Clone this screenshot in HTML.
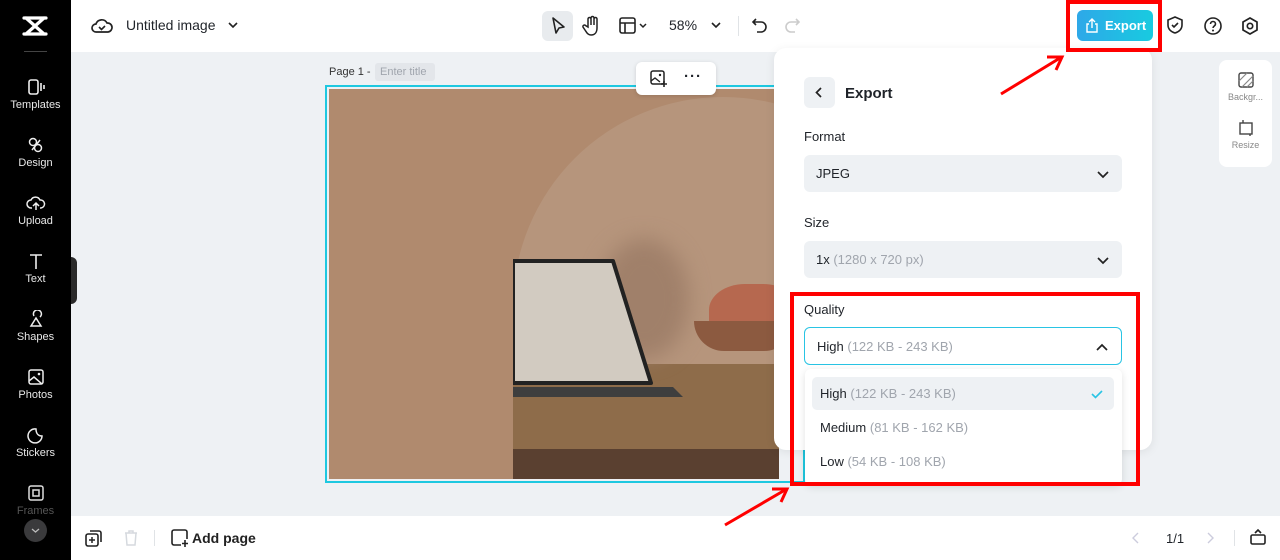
<!DOCTYPE html>
<html><head><meta charset="utf-8">
<style>
*{box-sizing:border-box;margin:0;padding:0}
html,body{width:1280px;height:560px;overflow:hidden}
body{font-family:"Liberation Sans",sans-serif;background:#eef1f4;position:relative;color:#1f2329}
.abs{position:absolute}
.side{left:0;top:0;width:71px;height:560px;background:#000;overflow:hidden}
.si{position:absolute;left:0;width:71px;text-align:center;color:#e8e8e8;font-size:11px}
.si svg{display:block;margin:0 auto 3px}
.top{left:71px;top:0;width:1209px;height:52px;background:#fff}
.bot{left:71px;top:516px;width:1209px;height:44px;background:#fff}
.panel{left:774px;top:48px;width:378px;height:402px;background:#fff;border-radius:12px;box-shadow:0 2px 10px rgba(0,0,0,.08)}
.lbl{font-size:13px;color:#1f2329}
.sel{position:absolute;left:30px;width:318px;height:37px;background:#eef1f4;border-radius:6px;font-size:13px;padding:11px 12px}
.g{color:#a0a5ad}
.chev{position:absolute;right:12px;top:12px}
</style></head><body>
<div class="abs side">
 <svg class="abs" style="left:22px;top:15px" width="26" height="22" viewBox="0 0 26 22"><path d="M2 3h22M2 19h22M4 3L22 19M22 3L4 19" stroke="#fff" stroke-width="3.2" fill="none" stroke-linecap="round"/></svg>
 <div class="abs" style="left:24px;top:51px;width:23px;height:1px;background:#444"></div>
 <div class="si" style="top:78px"><svg width="20" height="18" viewBox="0 0 20 18"><rect x="3" y="2" width="9" height="14" rx="2" stroke="#eee" stroke-width="1.6" fill="none"/><path d="M15 5v8M18 7v4" stroke="#eee" stroke-width="1.6"/></svg>Templates</div>
 <div class="si" style="top:136px"><svg width="20" height="18" viewBox="0 0 20 18"><circle cx="7" cy="6" r="3.5" stroke="#eee" stroke-width="1.5" fill="none"/><circle cx="12" cy="12" r="3.5" stroke="#eee" stroke-width="1.5" fill="none"/><path d="M6 14L14 4" stroke="#eee" stroke-width="1.5"/></svg>Design</div>
 <div class="si" style="top:194px"><svg width="20" height="18" viewBox="0 0 20 18"><path d="M6 14H5a4 4 0 010-8 5 5 0 019 0 4 4 0 011 8h-1M10 16V9m-3 3l3-3 3 3" stroke="#eee" stroke-width="1.5" fill="none"/></svg>Upload</div>
 <div class="si" style="top:252px"><svg width="20" height="18" viewBox="0 0 20 18"><path d="M4 3h12M10 3v14" stroke="#eee" stroke-width="1.6"/></svg>Text</div>
 <div class="si" style="top:310px"><svg width="20" height="18" viewBox="0 0 20 18"><path d="M10 8l5 8H5z M8 6a4 4 0 116 1" stroke="#eee" stroke-width="1.5" fill="none"/></svg>Shapes</div>
 <div class="si" style="top:368px"><svg width="20" height="18" viewBox="0 0 20 18"><rect x="3" y="2" width="14" height="14" rx="2" stroke="#eee" stroke-width="1.5" fill="none"/><path d="M3 13l5-4 8 7" stroke="#eee" stroke-width="1.5" fill="none"/><circle cx="13" cy="6" r="1.3" fill="#eee"/></svg>Photos</div>
 <div class="si" style="top:426px"><svg width="20" height="18" viewBox="0 0 20 18"><path d="M16 10a7 7 0 11-6-7c0 4 2 7 6 7z" stroke="#eee" stroke-width="1.5" fill="none"/></svg>Stickers</div>
 <div class="si" style="top:484px;color:#555"><svg width="20" height="18" viewBox="0 0 20 18"><rect x="3" y="2" width="14" height="14" rx="2" stroke="#ddd" stroke-width="1.5" fill="none"/><rect x="7" y="6" width="6" height="6" stroke="#ddd" stroke-width="1.5" fill="none"/></svg>Frames</div>
 <div class="abs" style="left:24px;top:519px;width:23px;height:23px;border-radius:50%;background:#3a3a3c"><svg width="23" height="23"><path d="M8 10l3.5 3 3.5-3" stroke="#bbb" stroke-width="1.3" fill="none"/></svg></div>
</div>
<div class="abs" style="left:71px;top:257px;width:6px;height:47px;background:#2a2a2a;border-radius:0 6px 6px 0"></div>
<div class="abs top">
 <svg class="abs" style="left:20px;top:16px" width="22" height="20" viewBox="0 0 22 20"><path d="M6 16H5a4 4 0 010-8 6 6 0 0111-1 4.5 4.5 0 011 9z" stroke="#222" stroke-width="1.7" fill="none"/><path d="M8 11l2.5 2.5L14 10" stroke="#222" stroke-width="1.6" fill="none"/></svg>
 <div class="abs" style="left:55px;top:17px;font-size:14px;color:#1f2329">Untitled image</div>
 <svg class="abs" style="left:156px;top:20px" width="12" height="10"><path d="M2 3l4 4 4-4" stroke="#222" stroke-width="1.6" fill="none"/></svg>
 <div class="abs" style="left:471px;top:11px;width:31px;height:30px;background:#e8ebee;border-radius:6px"></div>
 <svg class="abs" style="left:478px;top:16px" width="18" height="20" viewBox="0 0 18 20"><path d="M4 2l11 9-5 1-3 5z" stroke="#222" stroke-width="1.6" fill="none" stroke-linejoin="round"/></svg>
 <svg class="abs" style="left:511px;top:15px" width="20" height="22" viewBox="0 0 20 22"><path d="M6 12V4a1.5 1.5 0 013 0v6V3a1.5 1.5 0 013 0v7V4a1.5 1.5 0 013 0v9c0 4-2 7-6 7-3 0-4-2-6-5l-2-3a1.5 1.5 0 012.5-1.5z" stroke="#222" stroke-width="1.5" fill="none"/></svg>
 <svg class="abs" style="left:548px;top:17px" width="30" height="18" viewBox="0 0 30 18"><rect x="1" y="1" width="15" height="15" rx="2" stroke="#222" stroke-width="1.6" fill="none"/><path d="M1 6h15M6 6v10" stroke="#222" stroke-width="1.6"/><path d="M21 7l3 3 3-3" stroke="#222" stroke-width="1.5" fill="none"/></svg>
 <div class="abs" style="left:598px;top:17px;font-size:14px">58%</div>
 <svg class="abs" style="left:639px;top:20px" width="12" height="10"><path d="M2 3l4 4 4-4" stroke="#222" stroke-width="1.6" fill="none"/></svg>
 <div class="abs" style="left:667px;top:16px;width:1px;height:20px;background:#e0e3e6"></div>
 <svg class="abs" style="left:680px;top:16px" width="18" height="20" viewBox="0 0 18 20"><path d="M5 3L2 6l3 3M2 6h8a5 5 0 010 10H6" stroke="#222" stroke-width="1.6" fill="none"/></svg>
 <svg class="abs" style="left:712px;top:16px" width="18" height="20" viewBox="0 0 18 20"><path d="M13 3l3 3-3 3M16 6H8a5 5 0 000 10h4" stroke="#ccc" stroke-width="1.6" fill="none"/></svg>
 <div class="abs" style="left:1006px;top:10px;width:76px;height:31px;border-radius:6px;background:linear-gradient(90deg,#2ea8e8,#18cbe0);color:#fff;font-size:13px;font-weight:bold;padding:8px 0 0 28px">Export</div>
 <svg class="abs" style="left:1014px;top:18px" width="14" height="15" viewBox="0 0 14 15"><path d="M4 6H2v8h10V6h-2M7 10V1M4 4l3-3 3 3" stroke="#fff" stroke-width="1.4" fill="none"/></svg>
 <svg class="abs" style="left:1095px;top:15px" width="18" height="20" viewBox="0 0 18 20"><path d="M9 2l7 3v5c0 4-3 7-7 8-4-1-7-4-7-8V5z" stroke="#222" stroke-width="1.6" fill="none"/><path d="M6 10l2 2 4-4" stroke="#222" stroke-width="1.6" fill="none"/></svg>
 <svg class="abs" style="left:1132px;top:16px" width="20" height="20" viewBox="0 0 20 20"><circle cx="10" cy="10" r="8" stroke="#222" stroke-width="1.6" fill="none"/><path d="M7.5 8a2.5 2.5 0 115 0c0 2-2.5 2-2.5 4" stroke="#222" stroke-width="1.6" fill="none"/><circle cx="10" cy="14.5" r="1" fill="#222"/></svg>
 <svg class="abs" style="left:1169px;top:16px" width="20" height="20" viewBox="0 0 20 20"><path d="M10 2l7 4v8l-7 4-7-4V6z" stroke="#222" stroke-width="1.7" fill="none"/><circle cx="10" cy="10" r="2.7" stroke="#222" stroke-width="1.7" fill="none"/></svg>
</div>
<div class="abs" style="left:329px;top:66px;font-size:11px;color:#333">Page 1 -</div>
<div class="abs" style="left:375px;top:63px;width:60px;height:18px;background:#e3e6ea;border-radius:3px;font-size:11px;color:#a0a5ad;padding:3px 5px">Enter title</div>
<div class="abs" style="left:325px;top:85px;width:480px;height:398px;border:2px solid #1ec8e0"></div>
<div class="abs" style="left:329px;top:89px;width:450px;height:390px;background:#b08a6e;overflow:hidden">
 <div class="abs" style="left:184px;top:8px;width:420px;height:500px;border-radius:210px 210px 0 0;background:#b6957c"></div>
 <div class="abs" style="left:184px;top:275px;width:300px;height:120px;background:#8e6c4a"></div>
 <div class="abs" style="left:270px;top:150px;width:90px;height:120px;border-radius:50%;background:#a0806a;filter:blur(10px)"></div>
 <div class="abs" style="left:380px;top:195px;width:90px;height:65px;border-radius:40%;background:#b6684f"></div>
 <div class="abs" style="left:365px;top:232px;width:100px;height:30px;border-radius:0 0 50px 50px;background:#8c5a40"></div>
 <svg class="abs" style="left:184px;top:170px" width="260" height="140" viewBox="0 0 260 140"><path d="M0 2h100l38 122H0z" fill="#d2cbc1" stroke="#222" stroke-width="4" stroke-linejoin="round"/><path d="M0 128h160l10 10H0z" fill="#3e3e3e"/></svg>
 <div class="abs" style="left:184px;top:360px;width:270px;height:30px;background:#5a4030"></div>
</div>
<div class="abs" style="left:636px;top:62px;width:80px;height:33px;background:#fff;border-radius:6px;box-shadow:0 1px 4px rgba(0,0,0,.15)">
 <svg class="abs" style="left:14px;top:8px" width="18" height="18" viewBox="0 0 18 18"><rect x="1" y="1" width="13" height="13" rx="2" stroke="#222" stroke-width="1.5" fill="none"/><path d="M1 11l4-3 5 4" stroke="#222" stroke-width="1.4" fill="none"/><path d="M14 11v6M11 14h6" stroke="#222" stroke-width="1.6"/><circle cx="10" cy="5" r="1.2" fill="#222"/></svg>
 <div class="abs" style="left:48px;top:6px;font-size:15px;font-weight:bold;letter-spacing:1px">···</div>
</div>
<div class="abs" style="left:1219px;top:60px;width:53px;height:107px;background:#fff;border-radius:8px;font-size:9px;color:#888;text-align:center">
 <svg style="display:block;margin:12px auto 4px" width="16" height="16" viewBox="0 0 16 16"><rect x="1" y="1" width="14" height="14" rx="2" stroke="#444" stroke-width="1.4" fill="none"/><path d="M1 9l8-8M4 15L15 4M9 15l6-6" stroke="#888" stroke-width="1.2"/></svg>Backgr...
 <svg style="display:block;margin:18px auto 4px" width="16" height="16" viewBox="0 0 16 16"><rect x="2" y="3" width="12" height="11" stroke="#444" stroke-width="1.4" fill="none"/><path d="M5 0v3M12 14v2" stroke="#444" stroke-width="1.4"/></svg>Resize
</div>
<div class="abs panel">
 <div class="abs" style="left:30px;top:29px;width:31px;height:31px;background:#eef1f4;border-radius:6px"><svg width="31" height="31"><path d="M17 11l-4.5 4.5L17 20" stroke="#222" stroke-width="1.7" fill="none"/></svg></div>
 <div class="abs" style="left:71px;top:37px;font-size:15px;font-weight:bold">Export</div>
 <div class="abs lbl" style="left:30px;top:81px">Format</div>
 <div class="sel" style="top:107px">JPEG<svg class="chev" width="14" height="14"><path d="M2 5l5 5 5-5" stroke="#222" stroke-width="1.7" fill="none"/></svg></div>
 <div class="abs lbl" style="left:30px;top:167px">Size</div>
 <div class="sel" style="top:193px">1x <span class="g">(1280 x 720 px)</span><svg class="chev" width="14" height="14"><path d="M2 5l5 5 5-5" stroke="#222" stroke-width="1.7" fill="none"/></svg></div>
 <div class="abs lbl" style="left:30px;top:254px">Quality</div>
 <div class="sel" style="top:279px;background:#fff;border:1.5px solid #29c4e4;height:38px">High <span class="g">(122 KB - 243 KB)</span><svg class="chev" width="14" height="14"><path d="M2 10l5-5 5 5" stroke="#222" stroke-width="1.7" fill="none"/></svg></div>
</div>
<div class="abs" style="left:805px;top:369px;width:317px;height:116px;background:#fff;border-radius:6px;box-shadow:0 2px 8px rgba(0,0,0,.12);font-size:13px">
 <div class="abs" style="left:7px;top:8px;width:302px;height:33px;background:#eef1f4;border-radius:5px;padding:9px 8px">High <span class="g">(122 KB - 243 KB)</span><svg class="abs" style="right:10px;top:11px" width="14" height="12"><path d="M2 6l3.5 3.5L12 3" stroke="#29c4e4" stroke-width="1.6" fill="none"/></svg></div>
 <div class="abs" style="left:15px;top:51px">Medium <span class="g">(81 KB - 162 KB)</span></div>
 <div class="abs" style="left:15px;top:85px">Low <span class="g">(54 KB - 108 KB)</span></div>
</div>
<div class="abs bot">
 <svg class="abs" style="left:14px;top:13px" width="18" height="18" viewBox="0 0 18 18"><rect x="1" y="5" width="12" height="12" rx="2" stroke="#222" stroke-width="1.6" fill="none"/><path d="M5 2h9a2 2 0 012 2v9" stroke="#222" stroke-width="1.6" fill="none"/><path d="M7 8v6M4 11h6" stroke="#222" stroke-width="1.5"/></svg>
 <svg class="abs" style="left:52px;top:13px" width="16" height="18" viewBox="0 0 16 18"><path d="M2 4h12M6 4V2h4v2M3 4l1 12h8l1-12" stroke="#d5d9de" stroke-width="1.5" fill="none"/></svg>
 <div class="abs" style="left:83px;top:14px;width:1px;height:16px;background:#e0e3e6"></div>
 <svg class="abs" style="left:100px;top:13px" width="18" height="18" viewBox="0 0 18 18"><path d="M10 16H3a2 2 0 01-2-2V3a2 2 0 012-2h11a2 2 0 012 2v7" stroke="#222" stroke-width="1.6" fill="none"/><path d="M14 11v7M11 14.5h6" stroke="#222" stroke-width="1.6"/></svg>
 <div class="abs" style="left:121px;top:14px;font-size:14px;font-weight:bold;color:#222">Add page</div>
 <svg class="abs" style="left:1060px;top:15px" width="10" height="14"><path d="M7 2L2 7l5 5" stroke="#ccd" stroke-width="1.4" fill="none"/></svg>
 <div class="abs" style="left:1095px;top:15px;font-size:13px">1/1</div>
 <svg class="abs" style="left:1134px;top:15px" width="10" height="14"><path d="M3 2l5 5-5 5" stroke="#ccd" stroke-width="1.4" fill="none"/></svg>
 <div class="abs" style="left:1163px;top:14px;width:1px;height:16px;background:#e0e3e6"></div>
 <svg class="abs" style="left:1178px;top:12px" width="18" height="18" viewBox="0 0 18 18"><rect x="2" y="7" width="14" height="9" rx="1.5" stroke="#222" stroke-width="1.6" fill="none"/><path d="M6 5l3-3 3 3" stroke="#222" stroke-width="1.6" fill="none"/></svg>
</div>
<div class="abs" style="left:1066px;top:0;width:96px;height:52px;border:4px solid #f00"></div>
<div class="abs" style="left:790px;top:292px;width:350px;height:194px;border:4px solid #f00"></div>
<svg class="abs" style="left:0;top:0" width="1280" height="560"><g stroke="#f00" stroke-width="3" fill="none"><path d="M1001 94L1060 58"/><path d="M1047 57L1062 57 1056 70"/><path d="M725 525L785 490"/><path d="M772 489L787 489 781 502"/></g></svg>
</body></html>
